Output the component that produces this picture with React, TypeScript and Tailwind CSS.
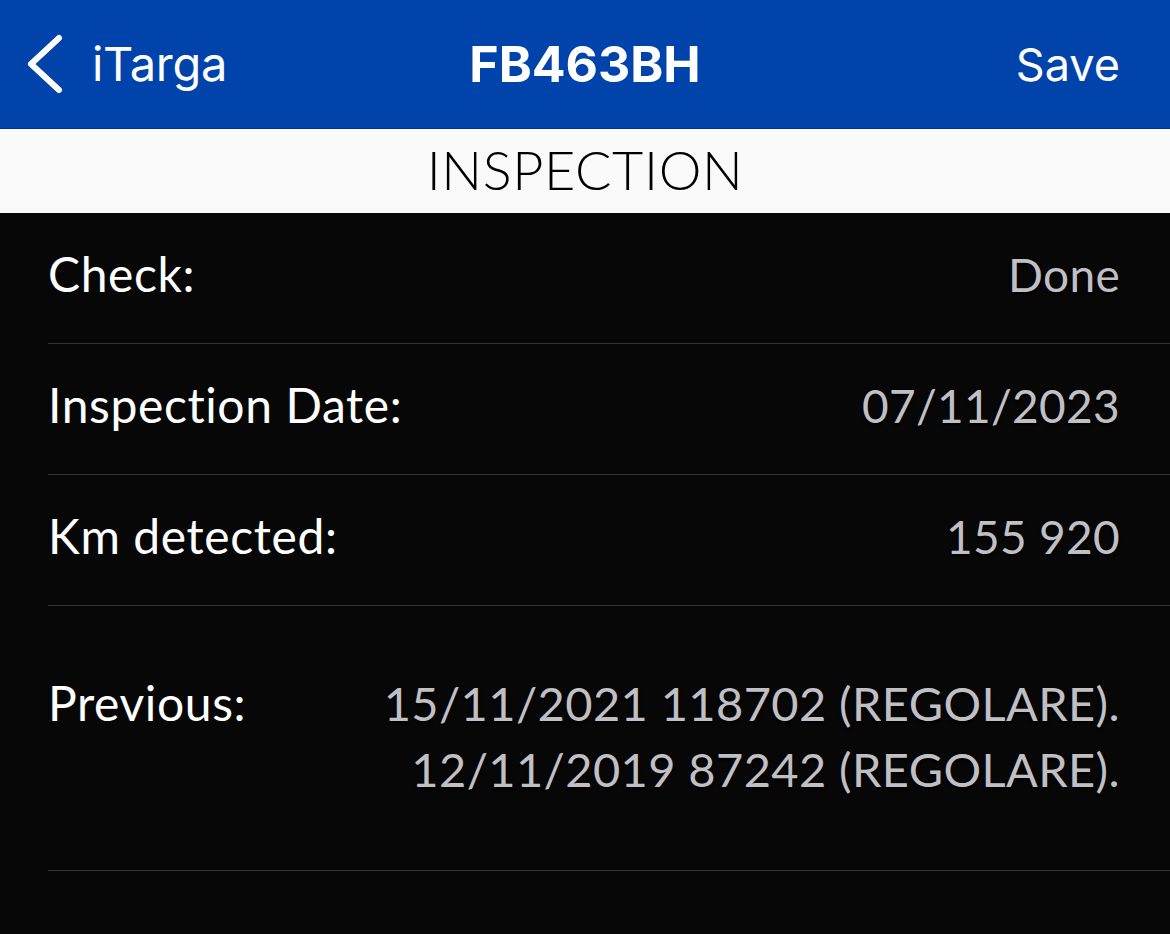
export default function App() {
  const rows = [
    { label: 'Check:', value: 'Done' },
    { label: 'Inspection Date:', value: '07/11/2023' },
    { label: 'Km detected:', value: '155 920' },
  ];

  return (
    <div className="min-h-screen w-[1170px] h-[934px] overflow-hidden bg-[#070707]">
      {/* nav bar */}
      <header className="relative h-[129px] bg-[#0044ab] border-b border-[#00309a] flex items-center justify-between pl-[26px] pr-[50px] text-white font-['Inter',sans-serif]">
        <div className="flex items-center gap-[28px] z-10">
          <svg width="38" height="60" viewBox="0 0 38 60" fill="none" className="mt-[-1px]">
            <polyline points="33,4 5,30 33,56" stroke="white" strokeWidth="6" strokeLinecap="round" strokeLinejoin="round" />
          </svg>
          <span className="text-[47px] leading-none tracking-[-0.3px] pb-[2px]">iTarga</span>
        </div>
        <div className="absolute left-0 right-0 text-center pointer-events-none">
          <span className="text-[50px] font-bold leading-none">FB463BH</span>
        </div>
        <span className="text-[45px] leading-none z-10">Save</span>
      </header>

      {/* section title */}
      <div className="h-[84px] bg-[#fafafa] flex items-center justify-center">
        <span className="text-[54px] font-light text-black tracking-[0.6px] font-['Lato',sans-serif] pb-[4px]">INSPECTION</span>
      </div>

      <main className="pl-[48px] font-['Lato',sans-serif]">
        {rows.map((r) => (
          <div key={r.label} className="h-[131px] flex items-center justify-between pr-[50px] pb-[8px] border-b border-[#333335]">
            <span className="text-[48px] text-white tracking-[0.6px]">{r.label}</span>
            <span className="text-[46px] text-[#bfbfc4] tracking-[0.3px] [text-shadow:0_2px_3px_#000]">{r.value}</span>
          </div>
        ))}
        <div className="h-[265px] flex items-start justify-between pr-[50px] pt-[64px] border-b border-[#333335]">
          <span className="text-[48px] text-white tracking-[0.6px] leading-[66px]">Previous:</span>
          <div className="text-right text-[47px] leading-[66px] tracking-[0.4px] text-[#bfbfc4] [text-shadow:0_2px_3px_#000]">
            <div>15/11/2021 118702 (REGOLARE).</div>
            <div>12/11/2019 87242 (REGOLARE).</div>
          </div>
        </div>
      </main>
    </div>
  );
}
